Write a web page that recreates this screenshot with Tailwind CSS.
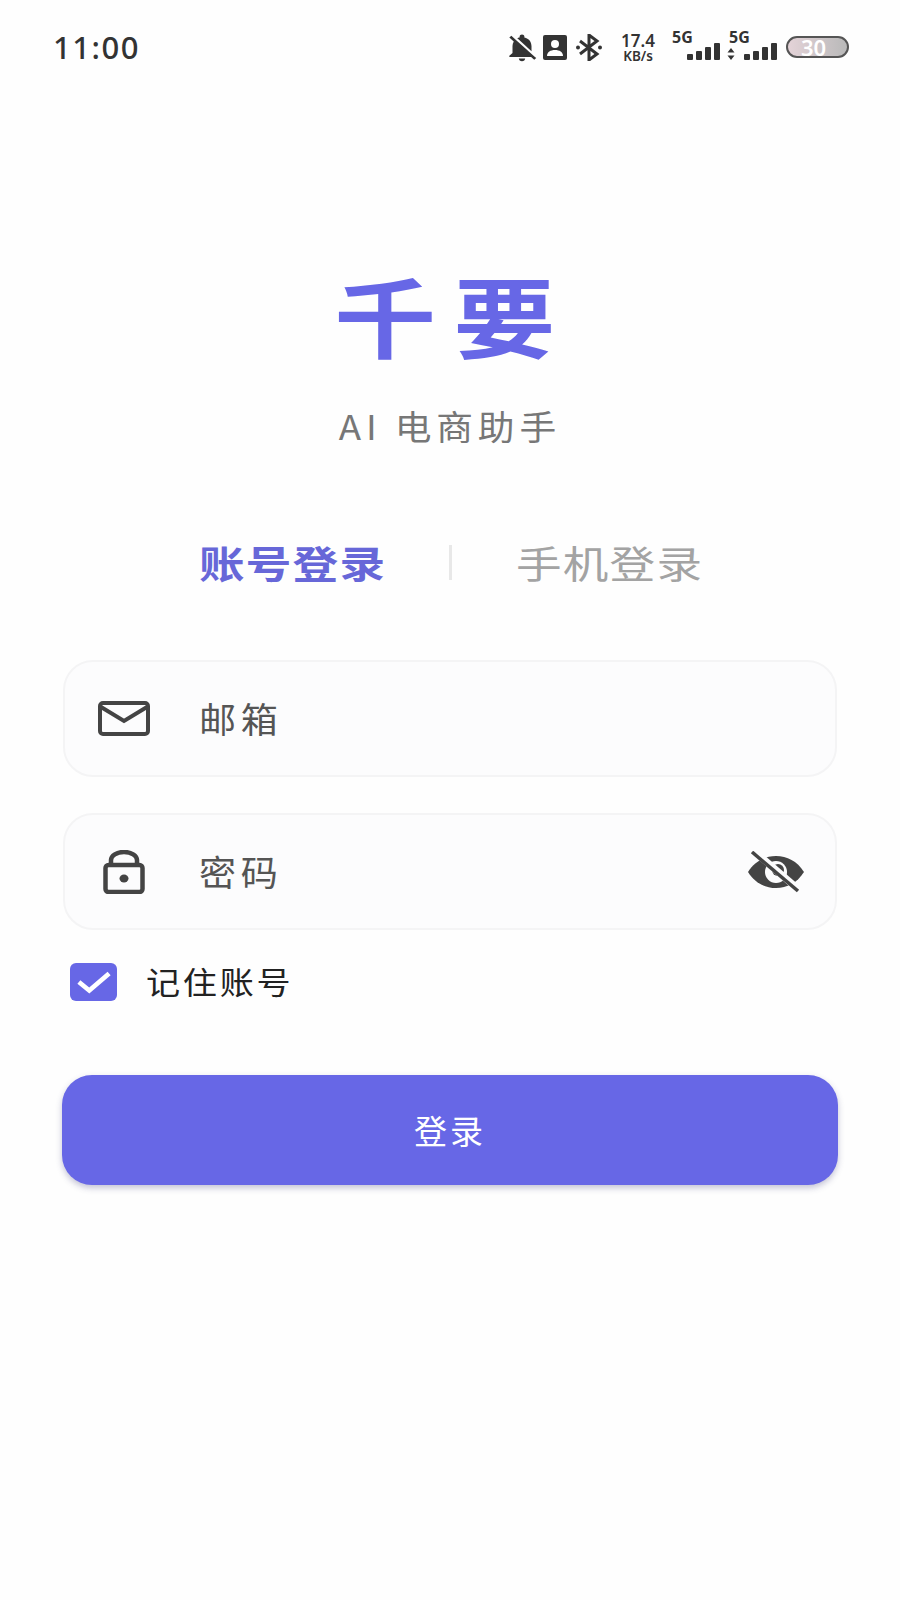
<!DOCTYPE html>
<html lang="zh-CN">
<head>
  <meta charset="UTF-8">
  <title>千要 登录</title>
  <meta name="viewport" content="width=device-width, initial-scale=1.0">
  <script src="https://cdn.jsdelivr.net/npm/@tailwindcss/browser@4"></script>
</head>
<body class="bg-[#fefefe] font-['Noto_Sans_CJK_SC','Noto_Sans',sans-serif]">
<div class="w-[900px] h-[1600px] overflow-hidden">

  <!-- Status bar -->
  <div class="flex items-center justify-between h-[94px] pl-[53px] pr-[51px] text-[#333]">
    <span class="font-['Noto_Sans',sans-serif] text-[31px] font-medium tracking-[1.500px] leading-none">11:00</span>
    <div class="flex items-center">
      <svg class="w-[38px] h-[33px]" viewBox="0 0 24 24" preserveAspectRatio="none" fill="#333"><path d="M20 18.69L7.84 6.14 5.27 3.49 4 4.76l2.8 2.8v.01c-.52.99-.8 2.16-.8 3.42v5l-2 2v1h13.73l2 2L21 19.72l-1-1.03zM12 22c1.11 0 2-.89 2-2h-4c0 1.11.89 2 2 2zm6-7.32V11c0-3.08-1.64-5.64-4.5-6.32V4c0-.83-.67-1.5-1.5-1.5s-1.5.67-1.5 1.5v.68c-.15.03-.29.08-.42.12-.1.03-.2.07-.3.11h-.01c-.2.08-.4.18-.59.27-.04.02-.08.05-.12.07L18 14.68z"/></svg>
      <svg class="w-[24px] h-[25px] ml-[2px]" viewBox="0 0 24 25"><rect width="24" height="25" rx="2" fill="#333"/><circle cx="12" cy="9" r="4" fill="#fff"/><path d="M4 21c0-4 3.500-6 8-6s8 2 8 6z" fill="#fff"/></svg>
      <svg class="w-[28px] h-[27px] ml-[8px]" viewBox="0 0 28 27" fill="none" stroke="#333" stroke-width="3"><path d="M5 7l17 13-8 6V1l8 6L5 20"/><circle cx="3" cy="13.500" r="2" fill="#333" stroke="none"/><circle cx="25" cy="13.500" r="2" fill="#333" stroke="none"/></svg>
      <div class="flex flex-col items-center w-[40px] ml-[15px] font-['Noto_Sans',sans-serif] font-semibold">
        <span class="text-[17px] leading-[17px]">17.4</span>
        <span class="text-[13.500px] leading-[14px]">KB/s</span>
      </div>
      <div class="relative w-[50px] h-[26px] ml-[12px]">
        <span class="absolute left-[2px] top-[-4px] font-['Noto_Sans',sans-serif] text-[16px] font-bold leading-[15px]">5G</span>
        <div class="absolute right-0 bottom-0 flex items-end gap-[3px]">
          <div class="w-[6px] h-[6px] rounded-[1px] bg-[#333]"></div>
          <div class="w-[6px] h-[9px] rounded-[1px] bg-[#333]"></div>
          <div class="w-[6px] h-[13px] rounded-[1px] bg-[#333]"></div>
          <div class="w-[6px] h-[17px] rounded-[1px] bg-[#333]"></div>
        </div>
      </div>
      <div class="relative w-[50px] h-[26px] ml-[7px]">
        <span class="absolute left-[2px] top-[-4px] font-['Noto_Sans',sans-serif] text-[16px] font-bold leading-[15px]">5G</span>
        <svg class="absolute left-0 bottom-0 w-[8px] h-[12px]" viewBox="0 0 8 12" fill="#333"><path d="M4 0l3.500 4.500h-7zM4 12L.5 7.500h7z"/></svg>
        <div class="absolute right-0 bottom-0 flex items-end gap-[3px]">
          <div class="w-[6px] h-[6px] rounded-[1px] bg-[#333]"></div>
          <div class="w-[6px] h-[9px] rounded-[1px] bg-[#333]"></div>
          <div class="w-[6px] h-[13px] rounded-[1px] bg-[#333]"></div>
          <div class="w-[6px] h-[17px] rounded-[1px] bg-[#333]"></div>
        </div>
      </div>
      <div class="flex items-center justify-center w-[63px] h-[22px] ml-[9px] pr-[8px] rounded-full border-2 border-[#555] bg-gradient-to-r from-[#e4d3d8] to-[#b9b9b9] font-['Noto_Sans',sans-serif] text-[22px] font-semibold text-white leading-none">30</div>
    </div>
  </div>

  <!-- Logo -->
  <div class="flex flex-col items-center mt-[170px]">
    <h1 class="text-[87px] font-bold leading-[100px] tracking-[15px] pl-[6px] scale-x-[1.17] text-[#6767e6]">千要</h1>
    <p class="mt-[42px] text-[34px] leading-[40px] tracking-[4.500px] scale-x-[1.08] text-[#777]">AI 电商助手</p>
  </div>

  <!-- Tabs -->
  <div class="flex items-center mt-[92px] pl-[199px]">
    <span class="w-[186px] origin-left scale-x-[1.2] text-[38px] font-bold leading-[48px] tracking-[1px] text-[#6767d8]">账号登录</span>
    <div class="w-[3px] h-[35px] ml-[64px] bg-[#e8e8e8]"></div>
    <span class="w-[186px] ml-[64px] origin-left scale-x-[1.2] text-[38px] leading-[48px] tracking-[1px] text-[#a3a3a3]">手机登录</span>
  </div>

  <!-- Form -->
  <div class="mt-[74px] ml-[63px] w-[774px]">
    <div class="flex items-center h-[117px] rounded-[30px] border-2 border-[#f4f4f5] bg-[#fcfcfd]">
      <svg class="w-[52px] h-[35px] ml-[33px]" viewBox="0 0 52 35" fill="none" stroke="#444" stroke-width="4"><rect x="2" y="2" width="48" height="31" rx="3"/><path d="M3 6l23 14L49 6"/></svg>
      <span class="w-[100px] ml-[49px] pb-[2px] origin-left scale-x-[1.06] text-[35px] leading-none tracking-[4.500px] text-[#555]">邮箱</span>
    </div>
    <div class="flex items-center h-[117px] mt-[36px] rounded-[30px] border-2 border-[#f4f4f5] bg-[#fcfcfd]">
      <svg class="w-[42px] h-[44px] ml-[38px]" viewBox="0 0 42 44" fill="none" stroke="#444" stroke-width="4.500"><rect x="2.500" y="15" width="37" height="27" rx="3"/><path d="M8 15v-5a13 8 0 0 1 26 0v5"/><ellipse cx="21" cy="28.500" rx="4.500" ry="4" fill="#444" stroke="none"/></svg>
      <span class="w-[100px] ml-[54px] pb-[3px] origin-left scale-x-[1.06] text-[35px] leading-none tracking-[4.500px] text-[#555]">密码</span>
      <svg class="w-[58px] h-[42px] ml-auto mr-[30px]" viewBox="0 0 58 42"><path d="M1 21C8 10 18 5 29 5s21 5 28 16c-7 11-17 16-28 16S8 32 1 21z" fill="#444"/><circle cx="29" cy="21" r="11" fill="#fcfcfd"/><circle cx="31" cy="19" r="6" fill="#444"/><path d="M7 0l44 38" stroke="#fcfcfd" stroke-width="7"/><path d="M5 1l46 39" stroke="#444" stroke-width="3.500"/></svg>
    </div>
    <div class="flex items-center mt-[33px] ml-[7px]">
      <div class="flex items-center justify-center w-[47px] h-[38px] rounded-[6px] bg-[#6767e6]">
        <svg class="w-[34px] h-[24px]" viewBox="0 0 36 24" fill="none" stroke="#fff" stroke-width="5"><path d="M2 12l11 9L34 3"/></svg>
      </div>
      <span class="ml-[29px] pb-[3px] origin-left scale-x-[1.1] text-[31px] leading-none tracking-[2.500px] text-[#222]">记住账号</span>
    </div>
    <button class="flex items-center justify-center w-[776px] h-[110px] mt-[74px] ml-[-1px] rounded-[30px] bg-[#6767e6] shadow-[0_3px_6px_rgba(60,60,120,0.3)] text-[33px] leading-none tracking-[3px] text-white">登录</button>
  </div>
</div>
</body>
</html>
